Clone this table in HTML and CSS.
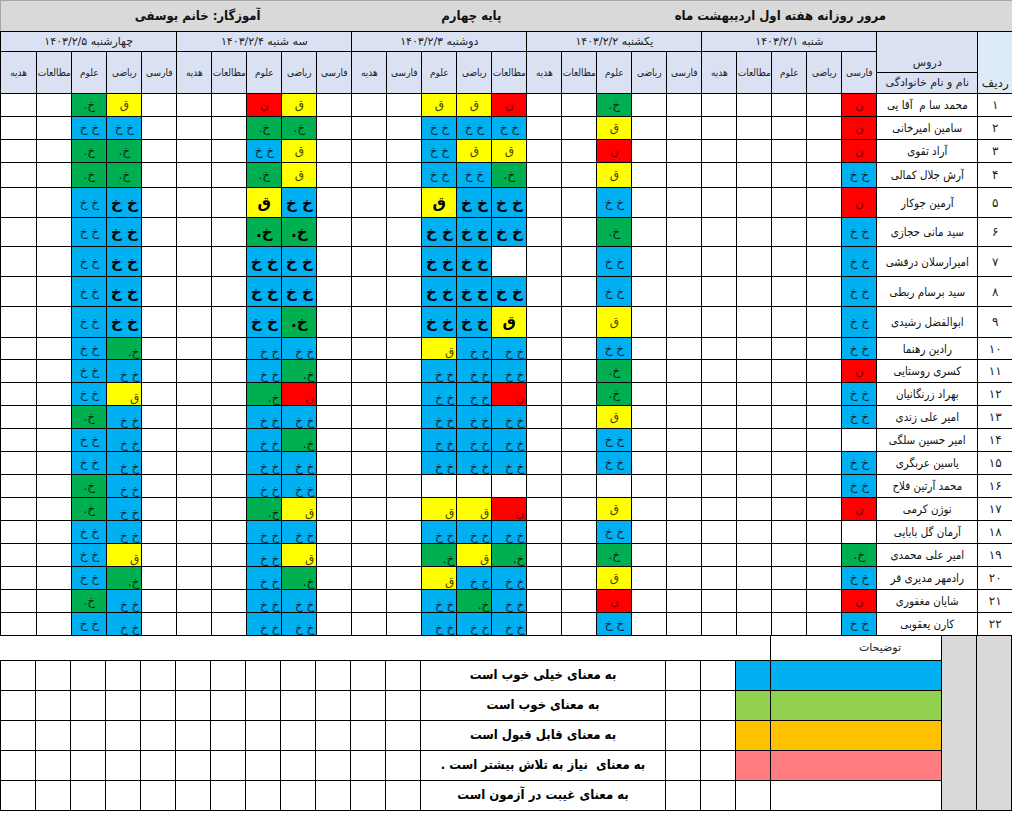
FILE: index.html
```html
<!DOCTYPE html>
<html lang="fa">
<head>
<meta charset="utf-8">
<title>مرور روزانه</title>
<link rel="stylesheet" href="styles.css">
</head>
<body>
<div class="sheet">
<table class="grid" dir="rtl">
<colgroup>
<col class="w35"><col class="w101">
<col class="w35"><col class="w35"><col class="w35"><col class="w35"><col class="w35">
<col class="w35"><col class="w35"><col class="w35"><col class="w35"><col class="w35">
<col class="w35"><col class="w35"><col class="w35"><col class="w35"><col class="w35">
<col class="w35"><col class="w35"><col class="w35"><col class="w35"><col class="w35">
<col class="w35"><col class="w35"><col class="w35"><col class="w35"><col class="w36">
</colgroup>
<tr class="h31"><td class="title" colspan="27"><div class="titlebar"><span class="t1">مرور روزانه هفته اول اردیبهشت ماه</span><span class="t2">پایه چهارم</span><span class="t3">آموزگار: خانم یوسفی</span></div></td></tr>
<tr class="h20">
<td class="radif" rowspan="3">ردیف</td>
<td class="hd dars" rowspan="2">دروس</td>
<td class="hd day" colspan="5">شنبه ۱۴۰۳/۲/۱</td>
<td class="hd day" colspan="5">یکشنبه  ۱۴۰۳/۲/۲</td>
<td class="hd day" colspan="5">دوشنبه ۱۴۰۳/۲/۳</td>
<td class="hd day" colspan="5">سه شنبه  ۱۴۰۳/۲/۴</td>
<td class="hd day" colspan="5">چهارشنبه ۱۴۰۳/۲/۵</td>
</tr>
<tr class="h21">
<td class="hd sub" rowspan="2">فارسی</td><td class="hd sub" rowspan="2">ریاضی</td><td class="hd sub" rowspan="2">علوم</td><td class="hd sub" rowspan="2">مطالعات</td><td class="hd sub" rowspan="2">هدیه</td>
<td class="hd sub" rowspan="2">فارسی</td><td class="hd sub" rowspan="2">ریاضی</td><td class="hd sub" rowspan="2">علوم</td><td class="hd sub" rowspan="2">مطالعات</td><td class="hd sub" rowspan="2">هدیه</td>
<td class="hd sub" rowspan="2">مطالعات</td><td class="hd sub" rowspan="2">ریاضی</td><td class="hd sub" rowspan="2">علوم</td><td class="hd sub" rowspan="2">فارسی</td><td class="hd sub" rowspan="2">هدیه</td>
<td class="hd sub" rowspan="2">فارسی</td><td class="hd sub" rowspan="2">ریاضی</td><td class="hd sub" rowspan="2">علوم</td><td class="hd sub" rowspan="2">مطالعات</td><td class="hd sub" rowspan="2">هدیه</td>
<td class="hd sub" rowspan="2">فارسی</td><td class="hd sub" rowspan="2">ریاضی</td><td class="hd sub" rowspan="2">علوم</td><td class="hd sub" rowspan="2">مطالعات</td><td class="hd sub" rowspan="2">هدیه</td>
</tr>
<tr class="h21"><td class="hd fam">نام و نام خانوادگی</td></tr>

<tr class="h23"><td class="num">۱</td><td class="nm">محمد سا م&nbsp; آقا یی</td>
<td class="n">ن</td><td></td><td></td><td></td><td></td><td></td><td></td><td class="g">خ.</td><td></td><td></td>
<td class="n">ن</td><td class="y">ق</td><td class="y">ق</td><td></td><td></td><td></td>
<td class="y">ق</td><td class="n">ن</td><td></td><td></td><td></td>
<td class="y">ق</td><td class="g">خ.</td><td></td><td></td></tr>

<tr class="h23"><td class="num">۲</td><td class="nm">سامین امیرخانی</td>
<td class="n">ن</td><td></td><td></td><td></td><td></td><td></td><td></td><td class="y">ق</td><td></td><td></td>
<td class="b">خ خ</td><td class="b">خ خ</td><td class="b">خ خ</td><td></td><td></td><td></td>
<td class="g">خ.</td><td class="g">خ.</td><td></td><td></td><td></td>
<td class="b">خ خ</td><td class="b">خ خ</td><td></td><td></td></tr>

<tr class="h23"><td class="num">۳</td><td class="nm">آراد تقوی</td>
<td class="n">ن</td><td></td><td></td><td></td><td></td><td></td><td></td><td class="n">ن</td><td></td><td></td>
<td class="y">ق</td><td class="y">ق</td><td class="b">خ خ</td><td></td><td></td><td></td>
<td class="y">ق</td><td class="b">خ خ</td><td></td><td></td><td></td>
<td class="g">خ.</td><td class="g">خ.</td><td></td><td></td></tr>

<tr class="h25"><td class="num">۴</td><td class="nm">آرش جلال کمالی</td>
<td class="b">خ خ</td><td></td><td></td><td></td><td></td><td></td><td></td><td class="y">ق</td><td></td><td></td>
<td class="g">خ.</td><td class="b">خ خ</td><td class="b">خ خ</td><td></td><td></td><td></td>
<td class="y">ق</td><td class="g">خ.</td><td></td><td></td><td></td>
<td class="g">خ.</td><td class="g">خ.</td><td></td><td></td></tr>

<tr class="h30"><td class="num">۵</td><td class="nm">آرمین جوکار</td>
<td class="n">ن</td><td></td><td></td><td></td><td></td><td></td><td></td><td class="b">خ خ</td><td></td><td></td>
<td class="b k">خ خ</td><td class="b k">خ خ</td><td class="y k">ق</td><td></td><td></td><td></td>
<td class="b k">خ خ</td><td class="y k">ق</td><td></td><td></td><td></td>
<td class="b k">خ خ</td><td class="b">خ خ</td><td></td><td></td></tr>

<tr class="h29"><td class="num">۶</td><td class="nm">سید مانی حجازی</td>
<td class="b">خ خ</td><td></td><td></td><td></td><td></td><td></td><td></td><td class="g">خ.</td><td></td><td></td>
<td class="b k">خ خ</td><td class="b k">خ خ</td><td class="b k">خ خ</td><td></td><td></td><td></td>
<td class="g k">خ.</td><td class="g k">خ.</td><td></td><td></td><td></td>
<td class="b k">خ خ</td><td class="b">خ خ</td><td></td><td></td></tr>

<tr class="h30"><td class="num">۷</td><td class="nm">امیرارسلان درفشی</td>
<td class="b">خ خ</td><td></td><td></td><td></td><td></td><td></td><td></td><td class="b">خ خ</td><td></td><td></td>
<td></td><td class="b k">خ خ</td><td class="b k">خ خ</td><td></td><td></td><td></td>
<td class="b k">خ خ</td><td class="b k">خ خ</td><td></td><td></td><td></td>
<td class="b k">خ خ</td><td class="b">خ خ</td><td></td><td></td></tr>

<tr class="h30"><td class="num">۸</td><td class="nm">سید برسام ربطی</td>
<td class="b">خ خ</td><td></td><td></td><td></td><td></td><td></td><td></td><td class="b">خ خ</td><td></td><td></td>
<td class="b k">خ خ</td><td class="b k">خ خ</td><td class="b k">خ خ</td><td></td><td></td><td></td>
<td class="b k">خ خ</td><td class="b k">خ خ</td><td></td><td></td><td></td>
<td class="b k">خ خ</td><td class="b">خ خ</td><td></td><td></td></tr>

<tr class="h31"><td class="num">۹</td><td class="nm">ابوالفضل رشیدی</td>
<td class="b">خ خ</td><td></td><td></td><td></td><td></td><td></td><td></td><td class="y">ق</td><td></td><td></td>
<td class="y k">ق</td><td class="b k">خ خ</td><td class="b k">خ خ</td><td></td><td></td><td></td>
<td class="g k">خ.</td><td class="b k">خ خ</td><td></td><td></td><td></td>
<td class="b k">خ خ</td><td class="b">خ خ</td><td></td><td></td></tr>

<tr class="h22"><td class="num">۱۰</td><td class="nm">رادین رهنما</td>
<td class="b">خ خ</td><td></td><td></td><td></td><td></td><td></td><td></td><td class="b">خ خ</td><td></td><td></td>
<td class="b r">خ خ</td><td class="b r">خ خ</td><td class="y r">ق</td><td></td><td></td><td></td>
<td class="b r">خ خ</td><td class="b r">خ خ</td><td></td><td></td><td></td>
<td class="g r">خ.</td><td class="b">خ خ</td><td></td><td></td></tr>

<tr class="h23"><td class="num">۱۱</td><td class="nm">کسری روستایی</td>
<td class="n">ن</td><td></td><td></td><td></td><td></td><td></td><td></td><td class="g">خ.</td><td></td><td></td>
<td class="b r">خ خ</td><td class="b r">خ خ</td><td class="b r">خ خ</td><td></td><td></td><td></td>
<td class="g r">خ.</td><td class="b r">خ خ</td><td></td><td></td><td></td>
<td class="b r">خ خ</td><td class="b">خ خ</td><td></td><td></td></tr>

<tr class="h23"><td class="num">۱۲</td><td class="nm">بهراد زرنگانیان</td>
<td class="b">خ خ</td><td></td><td></td><td></td><td></td><td></td><td></td><td class="g">خ.</td><td></td><td></td>
<td class="n r">ن</td><td class="b r">خ خ</td><td class="b r">خ خ</td><td></td><td></td><td></td>
<td class="n r">ن</td><td class="g r">خ.</td><td></td><td></td><td></td>
<td class="y r">ق</td><td class="b">خ خ</td><td></td><td></td></tr>

<tr class="h23"><td class="num">۱۳</td><td class="nm">امیر علی زندی</td>
<td class="b">خ خ</td><td></td><td></td><td></td><td></td><td></td><td></td><td class="y">ق</td><td></td><td></td>
<td class="b r">خ خ</td><td class="b r">خ خ</td><td class="b r">خ خ</td><td></td><td></td><td></td>
<td class="b r">خ خ</td><td class="b r">خ خ</td><td></td><td></td><td></td>
<td class="b r">خ خ</td><td class="g">خ.</td><td></td><td></td></tr>

<tr class="h23"><td class="num">۱۴</td><td class="nm">امیر حسین سلگی</td>
<td></td><td></td><td></td><td></td><td></td><td></td><td></td><td class="b">خ خ</td><td></td><td></td>
<td class="b r">خ خ</td><td class="b r">خ خ</td><td class="b r">خ خ</td><td></td><td></td><td></td>
<td class="g r">خ.</td><td class="b r">خ خ</td><td></td><td></td><td></td>
<td class="b r">خ خ</td><td class="b">خ خ</td><td></td><td></td></tr>

<tr class="h23"><td class="num">۱۵</td><td class="nm">یاسین عربگری</td>
<td class="b">خ خ</td><td></td><td></td><td></td><td></td><td></td><td></td><td class="b">خ خ</td><td></td><td></td>
<td class="b r">خ خ</td><td class="b r">خ خ</td><td class="b r">خ خ</td><td></td><td></td><td></td>
<td class="b r">خ خ</td><td class="b r">خ خ</td><td></td><td></td><td></td>
<td class="b r">خ خ</td><td class="b">خ خ</td><td></td><td></td></tr>

<tr class="h23"><td class="num">۱۶</td><td class="nm">محمد آرتین فلاح</td>
<td class="b">خ خ</td><td></td><td></td><td></td><td></td><td></td><td></td><td></td><td></td><td></td>
<td></td><td></td><td></td><td></td><td></td><td></td>
<td class="b r">خ خ</td><td class="b r">خ خ</td><td></td><td></td><td></td>
<td class="b r">خ خ</td><td class="g">خ.</td><td></td><td></td></tr>

<tr class="h23"><td class="num">۱۷</td><td class="nm">نوژن کرمی</td>
<td class="n">ن</td><td></td><td></td><td></td><td></td><td></td><td></td><td class="y">ق</td><td></td><td></td>
<td class="n r">ن</td><td class="y r">ق</td><td class="y r">ق</td><td></td><td></td><td></td>
<td class="y r">ق</td><td class="g r">خ.</td><td></td><td></td><td></td>
<td class="b r">خ خ</td><td class="g">خ.</td><td></td><td></td></tr>

<tr class="h23"><td class="num">۱۸</td><td class="nm">آرمان گل بابایی</td>
<td></td><td></td><td></td><td></td><td></td><td></td><td></td><td class="b">خ خ</td><td></td><td></td>
<td class="b r">خ خ</td><td class="b r">خ خ</td><td class="b r">خ خ</td><td></td><td></td><td></td>
<td class="b r">خ خ</td><td class="b r">خ خ</td><td></td><td></td><td></td>
<td class="b r">خ خ</td><td class="b">خ خ</td><td></td><td></td></tr>

<tr class="h23"><td class="num">۱۹</td><td class="nm">امیر علی محمدی</td>
<td class="g">خ.</td><td></td><td></td><td></td><td></td><td></td><td></td><td class="g">خ.</td><td></td><td></td>
<td class="g r">خ.</td><td class="y r">ق</td><td class="g r">خ.</td><td></td><td></td><td></td>
<td class="y r">ق</td><td class="b r">خ خ</td><td></td><td></td><td></td>
<td class="y r">ق</td><td class="b">خ خ</td><td></td><td></td></tr>

<tr class="h23"><td class="num">۲۰</td><td class="nm">رادمهر مدیری فر</td>
<td class="b">خ خ</td><td></td><td></td><td></td><td></td><td></td><td></td><td class="y">ق</td><td></td><td></td>
<td class="b r">خ خ</td><td class="b r">خ خ</td><td class="y r">ق</td><td></td><td></td><td></td>
<td class="g r">خ.</td><td class="b r">خ خ</td><td></td><td></td><td></td>
<td class="g r">خ.</td><td class="b">خ خ</td><td></td><td></td></tr>

<tr class="h23"><td class="num">۲۱</td><td class="nm">شایان مغفوری</td>
<td class="n">ن</td><td></td><td></td><td></td><td></td><td></td><td></td><td class="n">ن</td><td></td><td></td>
<td class="b r">خ خ</td><td class="g r">خ.</td><td class="b r">خ خ</td><td></td><td></td><td></td>
<td class="b r">خ خ</td><td class="b r">خ خ</td><td></td><td></td><td></td>
<td class="b r">خ خ</td><td class="g">خ.</td><td></td><td></td></tr>

<tr class="h23"><td class="num">۲۲</td><td class="nm">کارن یعقوبی</td>
<td class="b">خ خ</td><td></td><td></td><td></td><td></td><td></td><td></td><td class="b">خ خ</td><td></td><td></td>
<td class="b r">خ خ</td><td class="b r">خ خ</td><td class="b r">خ خ</td><td></td><td></td><td></td>
<td class="b r">خ خ</td><td class="b r">خ خ</td><td></td><td></td><td></td>
<td class="b r">خ خ</td><td class="b">خ خ</td><td></td><td></td></tr>
</table>

<table class="legend" dir="rtl">
<colgroup>
<col class="w35"><col class="w35"><col class="w171"><col class="w35"><col class="w35"><col class="w35"><col class="w245">
<col class="w35"><col class="w35"><col class="w35"><col class="w35"><col class="w35"><col class="w35">
<col class="w35"><col class="w35"><col class="w35"><col class="w35"><col class="w35"><col class="w35">
</colgroup>
<tr class="h24 first"><td class="grey" rowspan="6"></td><td class="grey" rowspan="6"></td><td class="note">توضیحات</td><td class="blank" colspan="16"></td></tr>
<tr class="h30"><td class="lb"></td><td class="lb"></td><td></td><td></td><td class="desc">به معنای خیلی خوب است</td><td></td><td></td><td></td><td></td><td></td><td></td><td></td><td></td><td></td><td></td><td></td><td></td></tr>
<tr class="h30"><td class="lg"></td><td class="lg"></td><td></td><td></td><td class="desc">به معنای خوب است</td><td></td><td></td><td></td><td></td><td></td><td></td><td></td><td></td><td></td><td></td><td></td><td></td></tr>
<tr class="h30"><td class="lo"></td><td class="lo"></td><td></td><td></td><td class="desc">به معنای قابل قبول است</td><td></td><td></td><td></td><td></td><td></td><td></td><td></td><td></td><td></td><td></td><td></td><td></td></tr>
<tr class="h30"><td class="lp"></td><td class="lp"></td><td></td><td></td><td class="desc">به معنای&nbsp; نیاز به تلاش بیشتر است .</td><td></td><td></td><td></td><td></td><td></td><td></td><td></td><td></td><td></td><td></td><td></td><td></td></tr>
<tr class="h30"><td></td><td></td><td></td><td></td><td class="desc">به معنای غیبت در آزمون است</td><td></td><td></td><td></td><td></td><td></td><td></td><td></td><td></td><td></td><td></td><td></td><td></td></tr>
</table>
</div>
</body>
</html>
```

FILE: styles.css
```css
html, body {
  margin: 0;
  padding: 0;
  background: #ffffff;
}

body {
  font-family: "DejaVu Sans", "Noto Sans", sans-serif;
  color: #000;
}

.sheet {
  width: 1012px;
}

table {
  border-collapse: collapse;
  table-layout: fixed;
  width: 1012px;
  direction: rtl;
}

.w35 { width: 35px; }
.w36 { width: 36px; }
.w101 { width: 101px; }
.w171 { width: 171px; }
.w245 { width: 245px; }

.h20 { height: 20px; }
.h21 { height: 21px; }
.h22 { height: 22px; }
.h23 { height: 23px; }
.h24 { height: 24px; }
.h25 { height: 25px; }
.h29 { height: 29px; }
.h30 { height: 30px; }
.h31 { height: 31px; }

td {
  border: 1px solid #000;
  padding: 0;
  text-align: center;
  vertical-align: middle;
  font-size: 12px;
  line-height: 14px;
  white-space: nowrap;
  overflow: hidden;
}

.title {
  background: #d9d9d9;
  border: 1px solid #a6a6a6;
  border-bottom: 1px solid #000;
  padding: 0;
}

.titlebar {
  display: flex;
  direction: rtl;
  align-items: center;
  font-family: "DejaVu Sans Condensed", "DejaVu Sans", sans-serif;
  font-weight: bold;
  font-size: 13px;
  color: #111;
}

.t1 { width: 464px; text-align: center; }
.t2 { width: 154px; text-align: center; }
.t3 { flex: 1; text-align: center; }

.hd {
  background: #d9e1f2;
  color: #222;
}

.day {
  font-size: 11px;
}

.sub {
  font-family: "DejaVu Sans Condensed", "DejaVu Sans", sans-serif;
  font-size: 10px;
}

.dars {
  vertical-align: bottom;
  padding-bottom: 2px;
  font-size: 11px;
}

.fam {
  font-size: 11px;
}

.radif {
  background: #ddebf7;
  vertical-align: bottom;
  padding-bottom: 3px;
  font-size: 12px;
  color: #222;
}

.num {
  font-size: 12px;
  color: #222;
}

.nm {
  font-family: "DejaVu Sans Condensed", "DejaVu Sans", sans-serif;
  font-size: 11.5px;
  color: #111;
}

.b { background: #00b0f0; color: #0a2b3d; }
.g { background: #00b050; color: #062a12; }
.y { background: #ffff00; color: #4a4300; }
.n { background: #ff0000; color: #7a0000; }

.k {
  font-weight: bold;
  font-size: 15px;
  color: #000;
}

.r {
  text-align: right;
  vertical-align: bottom;
  padding-right: 2px;
}

/* legend */
.legend .first td {
  border-top: none;
}

.grey {
  background: #d9d9d9;
}

.note {
  font-size: 11px;
  color: #222;
  padding-left: 48px;
}

.blank {
  border-left: none;
  border-right: 1px solid #000;
}

.lb { background: #00b0f0; }
.lg { background: #92d050; }
.lo { background: #ffc000; }
.lp { background: #ff7c80; }

.desc {
  font-family: "DejaVu Sans Condensed", "DejaVu Sans", sans-serif;
  font-weight: bold;
  font-size: 13px;
  color: #000;
}
```
